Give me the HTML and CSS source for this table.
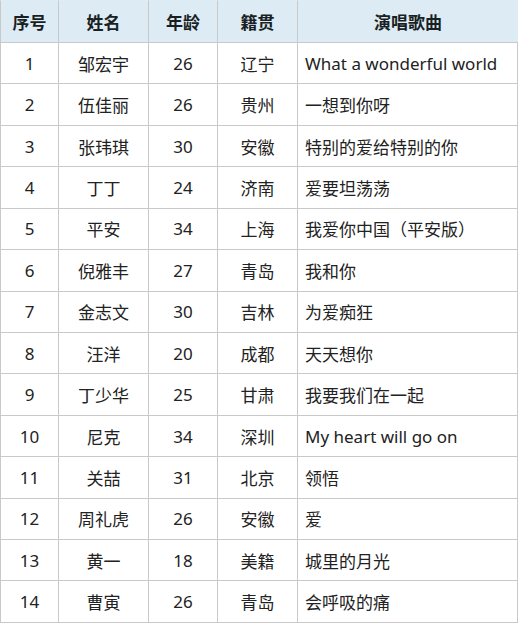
FILE: index.html
```html
<!DOCTYPE html>
<html lang="zh">
<head>
<meta charset="utf-8">
<title>演唱歌曲</title>
<link rel="stylesheet" href="styles.css">
</head>
<body>
<div class="tbl">
  <div class="c h">序号</div><div class="c h">姓名</div><div class="c h">年龄</div><div class="c h">籍贯</div><div class="c h">演唱歌曲</div>
  <div class="c">1</div><div class="c">邹宏宇</div><div class="c">26</div><div class="c">辽宁</div><div class="c s">What a wonderful world</div>
  <div class="c">2</div><div class="c">伍佳丽</div><div class="c">26</div><div class="c">贵州</div><div class="c s">一想到你呀</div>
  <div class="c">3</div><div class="c">张玮琪</div><div class="c">30</div><div class="c">安徽</div><div class="c s">特别的爱给特别的你</div>
  <div class="c">4</div><div class="c">丁丁</div><div class="c">24</div><div class="c">济南</div><div class="c s">爱要坦荡荡</div>
  <div class="c">5</div><div class="c">平安</div><div class="c">34</div><div class="c">上海</div><div class="c s">我爱你中国（平安版）</div>
  <div class="c">6</div><div class="c">倪雅丰</div><div class="c">27</div><div class="c">青岛</div><div class="c s">我和你</div>
  <div class="c">7</div><div class="c">金志文</div><div class="c">30</div><div class="c">吉林</div><div class="c s">为爱痴狂</div>
  <div class="c">8</div><div class="c">汪洋</div><div class="c">20</div><div class="c">成都</div><div class="c s">天天想你</div>
  <div class="c">9</div><div class="c">丁少华</div><div class="c">25</div><div class="c">甘肃</div><div class="c s">我要我们在一起</div>
  <div class="c">10</div><div class="c">尼克</div><div class="c">34</div><div class="c">深圳</div><div class="c s">My heart will go on</div>
  <div class="c">11</div><div class="c">关喆</div><div class="c">31</div><div class="c">北京</div><div class="c s">领悟</div>
  <div class="c">12</div><div class="c">周礼虎</div><div class="c">26</div><div class="c">安徽</div><div class="c s">爱</div>
  <div class="c">13</div><div class="c">黄一</div><div class="c">18</div><div class="c">美籍</div><div class="c s">城里的月光</div>
  <div class="c">14</div><div class="c">曹寅</div><div class="c">26</div><div class="c">青岛</div><div class="c s">会呼吸的痛</div>
</div>
</body>
</html>
```
FILE: styles.css
```css
html, body {
  margin: 0;
  padding: 0;
  background: #ffffff;
}
body {
  font-family: "Noto Sans", "Noto Sans CJK SC", sans-serif;
  color: #222222;
}
.tbl {
  display: grid;
  grid-template-columns: 58px 90px 69px 80px 221px;
  grid-template-rows: 42px repeat(14, 41.43px);
  width: 518px;
  border-right: 1px solid #c9c9c9;
  border-bottom: 1px solid #c9c9c9;
  box-sizing: border-box;
}
.c {
  display: flex;
  align-items: center;
  justify-content: center;
  font-size: 17px;
  border-top: 1px solid #c9c9c9;
  border-left: 1px solid #c9c9c9;
  white-space: nowrap;
}
.h {
  background: #dcebf4;
  font-weight: 700;
  font-size: 17px;
  color: #1a1f24;
  border-top-color: #dcebf4;
}
.s {
  justify-content: flex-start;
  padding-left: 7px;
}
```
